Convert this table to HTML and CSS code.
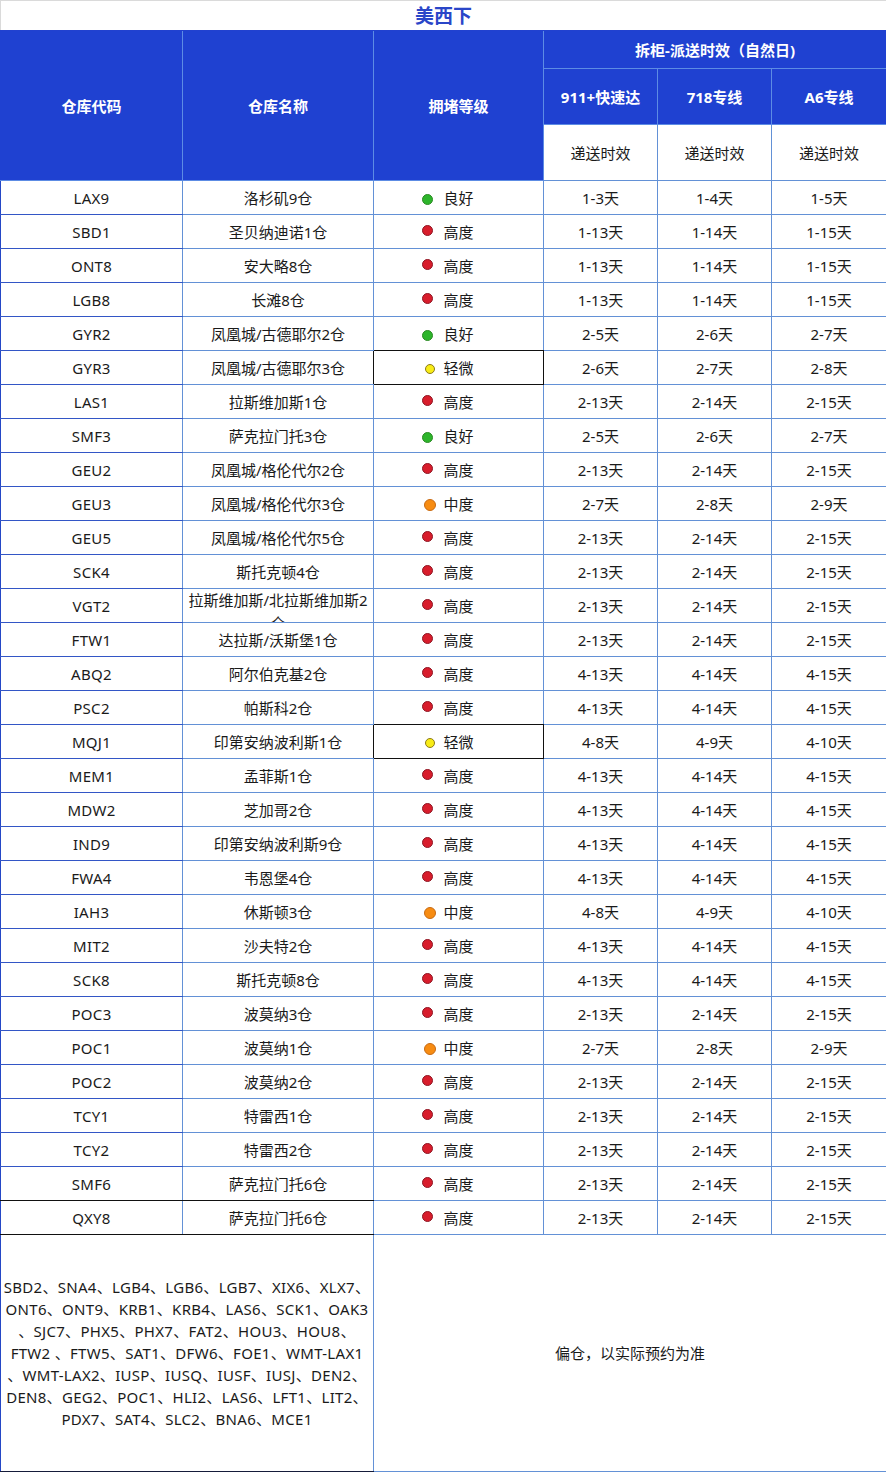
FILE: index.html
```html
<!DOCTYPE html>
<html lang="zh-CN">
<head>
<meta charset="utf-8">
<title>美西下</title>
<link rel="stylesheet" href="styles.css">
</head>
<body>
<table class="sheet">
  <colgroup>
    <col class="c1"><col class="c2"><col class="c3"><col class="c4"><col class="c5"><col class="c6">
  </colgroup>
  <tr class="title-row"><td class="title" colspan="6">美西下</td></tr>
  <tr class="h1">
    <th rowspan="3" class="hd first">仓库代码</th>
    <th rowspan="3" class="hd">仓库名称</th>
    <th rowspan="3" class="hd">拥堵等级</th>
    <th colspan="3" class="hd">拆柜-派送时效（自然日)</th>
  </tr>
  <tr class="h2">
    <th class="hd">911+快速达</th>
    <th class="hd">718专线</th>
    <th class="hd">A6专线</th>
  </tr>
  <tr class="h3">
    <td class="sub">递送时效</td>
    <td class="sub">递送时效</td>
    <td class="sub">递送时效</td>
  </tr>

  <tr class="row"><td class="code">LAX9</td><td>洛杉矶9仓</td><td><span class="dot g"></span>良好</td><td>1-3天</td><td>1-4天</td><td>1-5天</td></tr>
  <tr class="row"><td class="code">SBD1</td><td>圣贝纳迪诺1仓</td><td><span class="dot r"></span>高度</td><td>1-13天</td><td>1-14天</td><td>1-15天</td></tr>
  <tr class="row"><td class="code">ONT8</td><td>安大略8仓</td><td><span class="dot r"></span>高度</td><td>1-13天</td><td>1-14天</td><td>1-15天</td></tr>
  <tr class="row"><td class="code">LGB8</td><td>长滩8仓</td><td><span class="dot r"></span>高度</td><td>1-13天</td><td>1-14天</td><td>1-15天</td></tr>
  <tr class="row"><td class="code">GYR2</td><td>凤凰城/古德耶尔2仓</td><td class="bb"><span class="dot g"></span>良好</td><td>2-5天</td><td>2-6天</td><td>2-7天</td></tr>
  <tr class="row"><td class="code">GYR3</td><td class="br">凤凰城/古德耶尔3仓</td><td class="blk"><span class="dot y"></span>轻微</td><td>2-6天</td><td>2-7天</td><td>2-8天</td></tr>
  <tr class="row"><td class="code">LAS1</td><td>拉斯维加斯1仓</td><td><span class="dot r"></span>高度</td><td>2-13天</td><td>2-14天</td><td>2-15天</td></tr>
  <tr class="row"><td class="code">SMF3</td><td>萨克拉门托3仓</td><td><span class="dot g"></span>良好</td><td>2-5天</td><td>2-6天</td><td>2-7天</td></tr>
  <tr class="row"><td class="code">GEU2</td><td>凤凰城/格伦代尔2仓</td><td><span class="dot r"></span>高度</td><td>2-13天</td><td>2-14天</td><td>2-15天</td></tr>
  <tr class="row"><td class="code">GEU3</td><td>凤凰城/格伦代尔3仓</td><td><span class="dot o"></span>中度</td><td>2-7天</td><td>2-8天</td><td>2-9天</td></tr>
  <tr class="row"><td class="code">GEU5</td><td>凤凰城/格伦代尔5仓</td><td><span class="dot r"></span>高度</td><td>2-13天</td><td>2-14天</td><td>2-15天</td></tr>
  <tr class="row"><td class="code">SCK4</td><td>斯托克顿4仓</td><td><span class="dot r"></span>高度</td><td>2-13天</td><td>2-14天</td><td>2-15天</td></tr>
  <tr class="row"><td class="code">VGT2</td><td class="wrapcell"><div class="wrap">拉斯维加斯/北拉斯维加斯2仓</div></td><td><span class="dot r"></span>高度</td><td>2-13天</td><td>2-14天</td><td>2-15天</td></tr>
  <tr class="row"><td class="code">FTW1</td><td>达拉斯/沃斯堡1仓</td><td><span class="dot r"></span>高度</td><td>2-13天</td><td>2-14天</td><td>2-15天</td></tr>
  <tr class="row"><td class="code">ABQ2</td><td>阿尔伯克基2仓</td><td><span class="dot r"></span>高度</td><td>4-13天</td><td>4-14天</td><td>4-15天</td></tr>
  <tr class="row"><td class="code">PSC2</td><td>帕斯科2仓</td><td class="bb"><span class="dot r"></span>高度</td><td>4-13天</td><td>4-14天</td><td>4-15天</td></tr>
  <tr class="row"><td class="code">MQJ1</td><td class="br">印第安纳波利斯1仓</td><td class="blk"><span class="dot y"></span>轻微</td><td>4-8天</td><td>4-9天</td><td>4-10天</td></tr>
  <tr class="row"><td class="code">MEM1</td><td>孟菲斯1仓</td><td><span class="dot r"></span>高度</td><td>4-13天</td><td>4-14天</td><td>4-15天</td></tr>
  <tr class="row"><td class="code">MDW2</td><td>芝加哥2仓</td><td><span class="dot r"></span>高度</td><td>4-13天</td><td>4-14天</td><td>4-15天</td></tr>
  <tr class="row"><td class="code">IND9</td><td>印第安纳波利斯9仓</td><td><span class="dot r"></span>高度</td><td>4-13天</td><td>4-14天</td><td>4-15天</td></tr>
  <tr class="row"><td class="code">FWA4</td><td>韦恩堡4仓</td><td><span class="dot r"></span>高度</td><td>4-13天</td><td>4-14天</td><td>4-15天</td></tr>
  <tr class="row"><td class="code">IAH3</td><td>休斯顿3仓</td><td><span class="dot o"></span>中度</td><td>4-8天</td><td>4-9天</td><td>4-10天</td></tr>
  <tr class="row"><td class="code">MIT2</td><td>沙夫特2仓</td><td><span class="dot r"></span>高度</td><td>4-13天</td><td>4-14天</td><td>4-15天</td></tr>
  <tr class="row"><td class="code">SCK8</td><td>斯托克顿8仓</td><td><span class="dot r"></span>高度</td><td>4-13天</td><td>4-14天</td><td>4-15天</td></tr>
  <tr class="row"><td class="code">POC3</td><td>波莫纳3仓</td><td><span class="dot r"></span>高度</td><td>2-13天</td><td>2-14天</td><td>2-15天</td></tr>
  <tr class="row"><td class="code">POC1</td><td>波莫纳1仓</td><td><span class="dot o"></span>中度</td><td>2-7天</td><td>2-8天</td><td>2-9天</td></tr>
  <tr class="row"><td class="code">POC2</td><td>波莫纳2仓</td><td><span class="dot r"></span>高度</td><td>2-13天</td><td>2-14天</td><td>2-15天</td></tr>
  <tr class="row"><td class="code">TCY1</td><td>特雷西1仓</td><td><span class="dot r"></span>高度</td><td>2-13天</td><td>2-14天</td><td>2-15天</td></tr>
  <tr class="row"><td class="code">TCY2</td><td>特雷西2仓</td><td><span class="dot r"></span>高度</td><td>2-13天</td><td>2-14天</td><td>2-15天</td></tr>
  <tr class="row"><td class="code bb">SMF6</td><td class="bb">萨克拉门托6仓</td><td><span class="dot r"></span>高度</td><td>2-13天</td><td>2-14天</td><td>2-15天</td></tr>
  <tr class="row"><td class="code bb">QXY8</td><td class="bb">萨克拉门托6仓</td><td><span class="dot r"></span>高度</td><td>2-13天</td><td>2-14天</td><td>2-15天</td></tr>

  <tr class="foot">
    <td colspan="2" class="others">SBD2、SNA4、LGB4、LGB6、LGB7、XIX6、XLX7、<br>ONT6、ONT9、KRB1、KRB4、LAS6、SCK1、OAK3<br>、SJC7、PHX5、PHX7、FAT2、HOU3、HOU8、<br>FTW2 、FTW5、SAT1、DFW6、FOE1、WMT-LAX1<br>、WMT-LAX2、IUSP、IUSQ、IUSF、IUSJ、DEN2、<br>DEN8、GEG2、POC1、HLI2、LAS6、LFT1、LIT2、<br>PDX7、SAT4、SLC2、BNA6、MCE1</td>
    <td colspan="4" class="note">偏仓，以实际预约为准</td>
  </tr>
</table>
</body>
</html>
```

FILE: styles.css
```css
* { box-sizing: border-box; }

html, body {
  margin: 0;
  padding: 0;
  background: #ffffff;
}

body {
  font-family: "Noto Sans", "Noto Sans CJK SC", sans-serif;
  font-size: 15px;
  color: #1a1a1a;
}

.sheet {
  width: 886px;
  border-collapse: collapse;
  table-layout: fixed;
}

.c1 { width: 182px; }
.c2 { width: 191px; }
.c3 { width: 170px; }
.c4 { width: 114px; }
.c5 { width: 114px; }
.c6 { width: 115px; }

.sheet td,
.sheet th {
  padding: 0 2px;
  text-align: center;
  vertical-align: middle;
  border: 1px solid #6391d6;
  line-height: 20px;
}

.title-row { height: 30px; }

.sheet td.title {
  font-size: 19px;
  font-weight: 700;
  color: #2a46c8;
  border: 1px solid #dadada;
  border-bottom-color: #2141cf;
}

.sheet th.hd {
  background: #1f41d1;
  color: #ffffff;
  font-weight: 700;
  font-size: 15px;
  border-color: #5d8ce4;
}

.sheet th.first { border-left-color: #1f41d1; }

.h1 { height: 38px; }
.h2 { height: 56px; }
.h3 { height: 56px; }

.sheet td.sub {
  background: #ffffff;
  color: #1a1a1a;
}

.row { height: 34px; }

.sheet td.code {
  border-left: 1px solid #2447c6;
  border-bottom-color: #3356c6;
  letter-spacing: 0.3px;
}

.sheet td.bb { border-bottom-color: #111111; }
.sheet td.br { border-right-color: #111111; }
.sheet td.blk { border-color: #111111; }

.wrapcell { vertical-align: top; }

.wrap {
  height: 33px;
  overflow: hidden;
  white-space: normal;
  line-height: 23px;
}

.dot {
  display: inline-block;
  width: 11px;
  height: 11px;
  border-radius: 50%;
  vertical-align: middle;
  margin-left: -21px;
  margin-right: 10px;
  border: 1px solid;
}

.dot.g { background: #2db52b; border-color: #2a8a22; }
.dot.r { background: #d81d2c; border-color: #8e1522; margin-bottom: 5px; }
.dot.y { background: #f8ec16; border-color: #8c7a1a; width: 10px; height: 10px; margin-left: -18px; margin-right: 8px; }
.dot.o { background: #f78c12; border-color: #c86a12; width: 12px; height: 12px; margin-left: -19px; margin-right: 7px; }

.foot { height: 237px; }

.sheet td.others {
  line-height: 22px;
  white-space: nowrap;
  padding: 0;
  letter-spacing: 0.3px;
  border-left: 1px solid #2447c6;
  border-bottom-color: #151b3a;
}

.sheet td.note {
  padding: 0;
  border-color: #6391d6;
}
```
